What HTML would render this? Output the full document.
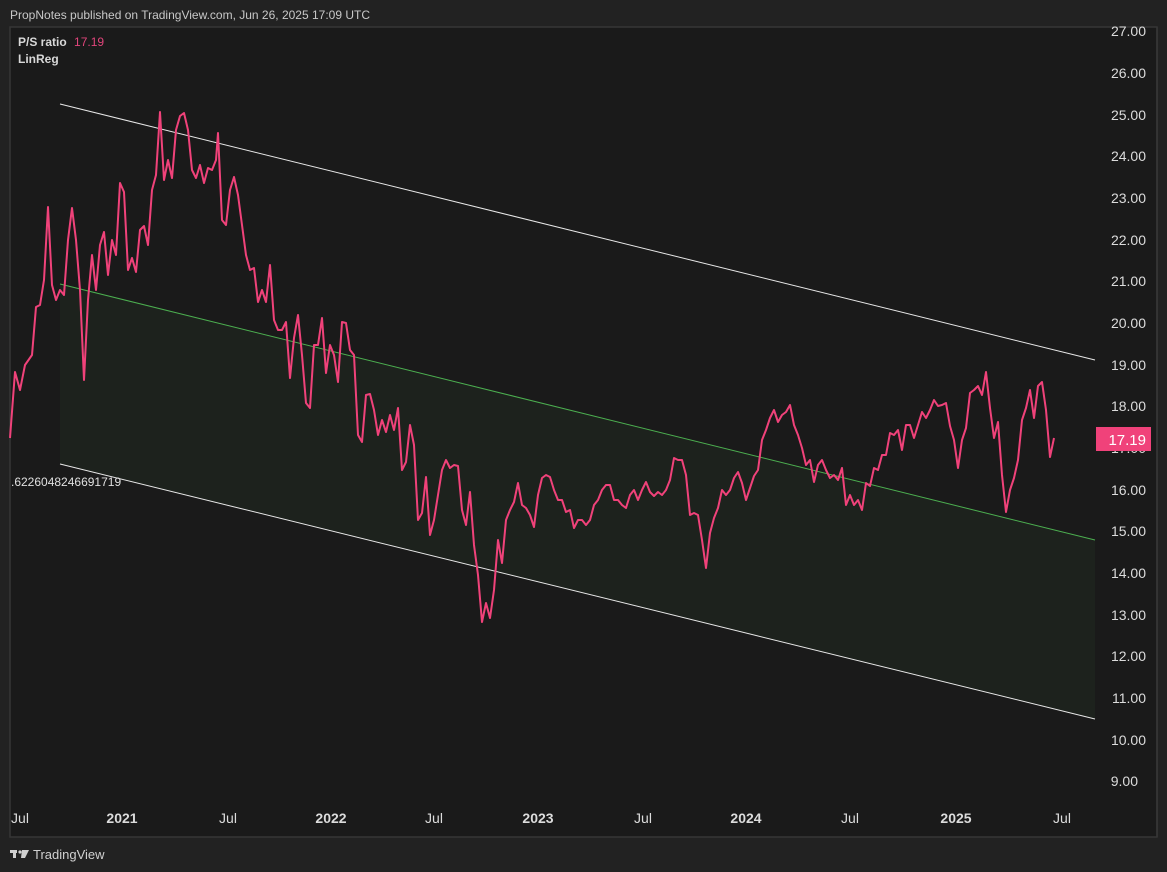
<!DOCTYPE html>
<html><head><meta charset="utf-8"><style>
html,body{margin:0;padding:0;background:#222222;width:1167px;height:872px;overflow:hidden;font-family:"Liberation Sans",sans-serif;}
.t{position:absolute;color:#d8d8d8;font-size:12px;}
</style></head><body>
<div class="t" style="left:10px;top:8px;color:#c8c8c8">PropNotes published on TradingView.com, Jun 26, 2025 17:09 UTC</div>
<svg width="1167" height="872" style="position:absolute;left:0;top:0">
<rect x="10" y="27" width="1147" height="810" fill="#1a1a1a" stroke="#363636" stroke-width="1.5"/>
<line x1="1157" y1="27" x2="1157" y2="837" stroke="#363636" stroke-width="1.5"/>
<polygon points="60,284 1095,540 1095,719 60,464" fill="#1d221d"/>
<line x1="60" y1="104" x2="1095" y2="360" stroke="#e8e8e8" stroke-width="1"/>
<line x1="60" y1="464" x2="1095" y2="719" stroke="#e8e8e8" stroke-width="1"/>
<line x1="60" y1="284" x2="1095" y2="540" stroke="#4caf50" stroke-width="1"/>
<polyline fill="none" stroke="#f0427a" stroke-width="2" stroke-linejoin="round" points="10,438 15,372 20,390 25,365 32,355 36,307 40,305 44,280 48,207 52,285 56,300 60,290 64,295 68,240 72,208 76,240 80,290 84,380 88,300 92,255 96,290 100,245 104,232 108,275 112,240 116,255 120,183 124,192 128,270 132,258 136,272 140,230 144,226 148,245 152,190 156,175 160,112 164,180 168,160 172,178 176,130 180,116 184,113 188,130 192,170 196,178 200,165 204,183 208,168 212,170 216,160 218,133 222,220 226,225 230,190 234,177 238,195 242,225 246,255 250,270 254,268 258,302 262,290 266,302 270,265 274,320 278,330 282,330 286,322 290,378 294,338 298,315 302,355 306,403 310,408 314,345 318,345 322,318 326,373 330,345 334,355 338,382 342,322 346,323 350,350 354,355 358,435 362,442 366,395 370,394 374,410 378,435 382,420 386,432 390,415 394,430 398,408 402,470 406,462 410,425 414,445 418,520 422,513 426,477 430,535 434,520 438,495 442,470 446,460 450,468 454,465 458,466 462,510 466,525 470,492 474,545 478,575 482,622 486,603 490,618 494,590 498,540 502,563 506,520 510,510 514,502 518,483 522,505 526,508 530,515 534,527 538,495 542,478 546,475 550,477 554,490 558,500 562,500 566,512 570,510 574,528 578,520 582,520 586,525 590,520 594,505 598,500 602,490 606,485 610,485 614,500 618,500 622,505 626,508 630,495 634,490 638,500 642,490 646,482 650,492 654,496 658,492 662,495 666,490 670,480 674,458 678,460 682,460 686,475 690,515 694,513 698,515 702,540 706,568 710,533 714,518 718,508 722,490 726,495 730,490 734,478 738,472 742,483 746,500 750,488 754,476 758,470 762,440 766,430 770,418 774,410 778,422 782,415 786,412 790,405 794,425 798,435 802,448 806,465 810,460 814,482 818,465 822,460 826,470 830,478 834,475 838,480 842,468 846,505 850,495 854,505 858,500 862,510 866,483 870,486 874,468 878,470 882,455 886,455 890,433 894,435 898,430 902,450 906,425 910,425 914,438 918,425 922,412 926,418 930,410 934,400 938,406 942,405 946,403 950,426 954,440 958,468 962,440 966,428 970,393 974,390 978,386 982,395 986,372 990,408 994,438 998,422 1002,475 1006,512 1010,490 1014,478 1018,460 1022,420 1026,408 1030,390 1034,418 1038,386 1042,382 1046,410 1050,457 1054,438"/>
<g font-family="Liberation Sans, sans-serif" font-size="14" fill="#dcdcdc" text-anchor="end">
<text x="1146" y="36">27.00</text><text x="1146" y="78">26.00</text><text x="1146" y="120">25.00</text><text x="1146" y="161">24.00</text><text x="1146" y="203">23.00</text><text x="1146" y="245">22.00</text><text x="1146" y="286">21.00</text><text x="1146" y="328">20.00</text><text x="1146" y="370">19.00</text><text x="1146" y="411">18.00</text><text x="1146" y="453">17.00</text><text x="1146" y="495">16.00</text><text x="1146" y="536">15.00</text><text x="1146" y="578">14.00</text><text x="1146" y="620">13.00</text><text x="1146" y="661">12.00</text><text x="1146" y="703">11.00</text><text x="1146" y="745">10.00</text><text x="1138" y="786">9.00</text>
</g>
<rect x="1096" y="427" width="55" height="24" fill="#f0427a"/>
<text x="1146" y="445" font-family="Liberation Sans, sans-serif" font-size="15" fill="#fff" text-anchor="end">17.19</text>
<g font-family="Liberation Sans, sans-serif" font-size="14" fill="#dcdcdc" text-anchor="middle">
<text x="20" y="823">Jul</text><text x="122" y="823" font-weight="bold">2021</text><text x="228" y="823">Jul</text><text x="331" y="823" font-weight="bold">2022</text><text x="434" y="823">Jul</text><text x="538" y="823" font-weight="bold">2023</text><text x="643" y="823">Jul</text><text x="746" y="823" font-weight="bold">2024</text><text x="850" y="823">Jul</text><text x="956" y="823" font-weight="bold">2025</text><text x="1062" y="823">Jul</text>
</g>
<text x="11" y="486" font-family="Liberation Sans, sans-serif" font-size="12" fill="#e0e0e0">.6226048246691719</text>
<g fill="#d0d0d0"><rect x="10" y="850" width="7" height="3"/><rect x="13" y="850" width="3" height="8"/><circle cx="20" cy="852" r="1.6"/><polygon points="22,850 29,850 25,858 21,858"/></g>
<text x="33" y="859" font-family="Liberation Sans, sans-serif" font-size="13" fill="#d0d0d0">TradingView</text>
</svg>
<div class="t" style="left:18px;top:35px;font-weight:bold;font-size:12px">P/S ratio <span style="color:#e0457b;font-weight:normal;margin-left:4px">17.19</span></div>
<div class="t" style="left:18px;top:52px;font-weight:bold;font-size:12px">LinReg</div>
</body></html>
